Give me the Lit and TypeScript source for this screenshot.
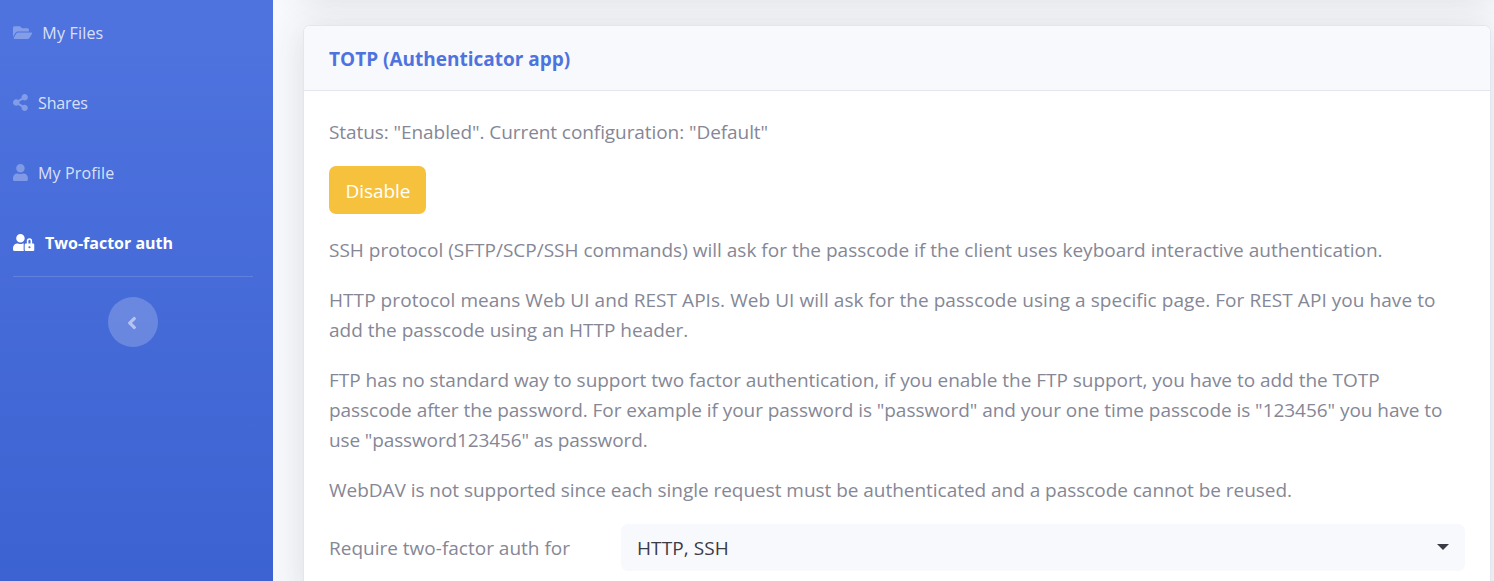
import { LitElement, html, css, svg } from "lit";
import { customElement, property } from "lit/decorators.js";
import { classMap } from "lit/directives/class-map.js";

interface NavEntry {
  label: string;
  cls: string;
  width: number;
  path: string;
  active?: boolean;
}

const NAV: NavEntry[] = [
  {
    label: "My Files",
    cls: "files",
    width: 576,
    path: "M572.694 292.093L500.27 416.248A63.997 63.997 0 0 1 444.989 448H45.025c-18.523 0-30.064-20.093-20.731-36.093l72.424-124.155A64 64 0 0 1 152 256h399.964c18.523 0 30.064 20.093 20.73 36.093zM152 224h328v-48c0-26.51-21.49-48-48-48H272l-64-64H48C21.49 64 0 85.49 0 112v278.046l69.077-118.418C86.214 242.25 117.989 224 152 224z",
  },
  {
    label: "Shares",
    cls: "shares",
    width: 448,
    path: "M352 320c-22.608 0-43.387 7.819-59.79 20.895l-102.486-64.054a96.551 96.551 0 0 0 0-41.683l102.486-64.054C308.613 184.181 329.392 192 352 192c53.019 0 96-42.981 96-96S405.019 0 352 0s-96 42.981-96 96c0 7.158.79 14.13 2.276 20.841L155.79 180.895C139.387 167.819 118.608 160 96 160c-53.019 0-96 42.981-96 96s42.981 96 96 96c22.608 0 43.387-7.819 59.79-20.895l102.486 64.054A96.301 96.301 0 0 0 256 416c0 53.019 42.981 96 96 96s96-42.981 96-96-42.981-96-96-96z",
  },
  {
    label: "My Profile",
    cls: "profile",
    width: 448,
    path: "M224 256c70.7 0 128-57.3 128-128S294.7 0 224 0 96 57.3 96 128s57.3 128 128 128zm89.6 32h-16.7c-22.2 10.2-46.9 16-72.9 16s-50.6-5.8-72.9-16h-16.7C60.2 288 0 348.2 0 422.4V464c0 26.5 21.5 48 48 48h352c26.5 0 48-21.5 48-48v-41.6c0-74.2-60.2-134.4-134.4-134.4z",
  },
  {
    label: "Two-factor auth",
    cls: "mfa",
    width: 640,
    active: true,
    path: "M224 256A128 128 0 1 0 96 128a128 128 0 0 0 128 128zm96 64a63.08 63.08 0 0 1 8.1-30.5c-4.8-.5-9.5-1.5-14.5-1.5h-16.7a174.08 174.08 0 0 1-145.8 0h-16.7A134.43 134.43 0 0 0 0 422.4V464a48 48 0 0 0 48 48h280.9a63.54 63.54 0 0 1-8.9-32zm288-32h-32v-80a80 80 0 0 0-160 0v80h-32a32 32 0 0 0-32 32v160a32 32 0 0 0 32 32h224a32 32 0 0 0 32-32V320a32 32 0 0 0-32-32zM496 432a32 32 0 1 1 32-32 32 32 0 0 1-32 32zm32-144h-64v-80a32 32 0 0 1 64 0z",
  },
];

const CHEVRON =
  "M31.7 239l136-136c9.4-9.4 24.6-9.4 33.9 0l22.6 22.6c9.4 9.4 9.4 24.6 0 33.9L127.9 256l96.4 96.4c9.4 9.4 9.4 24.6 0 33.9L201.7 409c-9.4 9.4-24.6 9.4-33.9 0l-136-136c-9.5-9.4-9.5-24.6-.1-34z";

@customElement("fa-icon")
export class FaIcon extends LitElement {
  static styles = css`
    :host {
      display: block;
      flex: none;
    }
    .glyph {
      display: block;
      fill: currentColor;
      overflow: visible;
    }
  `;
  @property({ type: Number }) size = 17;
  @property({ type: Number }) box = 512;
  @property() path = "";

  render() {
    return html`<svg
      class="glyph"
      viewBox="0 0 ${this.box} 512"
      width=${(this.size * this.box) / 512}
      height=${this.size}
      aria-hidden="true"
    >
      ${svg`<path d=${this.path}></path>`}
    </svg>`;
  }
}

@customElement("side-nav")
export class SideNav extends LitElement {
  static styles = css`
    :host {
      display: flex;
      flex-direction: column;
      box-sizing: border-box;
      width: 273px;
      flex: none;
      padding: 0 20px 0 13px;
      background: linear-gradient(180deg, #4e73df 40px, #224abe 1380px);
    }
    .list {
      display: flex;
      flex-direction: column;
      gap: 4px;
    }
    .item {
      display: flex;
      align-items: center;
      gap: 10.2px;
      height: 66px;
      font-size: 16px;
      line-height: 24px;
      color: rgba(255, 255, 255, 0.8);
      text-decoration: none;
      white-space: nowrap;
    }
    .icon {
      color: rgba(255, 255, 255, 0.3);
      margin-top: -1px;
    }
    .item.active {
      color: #fff;
      font-weight: 700;
    }
    .active .icon {
      color: #fff;
    }
    .files {
      letter-spacing: 0.2px;
    }
    .shares {
      letter-spacing: -0.15px;
    }
    .profile {
      letter-spacing: 0.15px;
    }
    .mfa {
      gap: 10.8px;
    }
    .divider {
      height: 1px;
      background: rgba(255, 255, 255, 0.15);
      margin-bottom: 20px;
    }
    .toggle {
      align-self: center;
      display: flex;
      align-items: center;
      justify-content: center;
      width: 50px;
      height: 50px;
      box-sizing: border-box;
      padding: 1px 2px 0 0;
      border: 0;
      border-radius: 50%;
      background: rgba(255, 255, 255, 0.2);
      color: rgba(255, 255, 255, 0.5);
    }
  `;

  render() {
    return html`
      <nav class="list">
        ${NAV.map(
          (n) => html`<a class=${classMap({ item: true, [n.cls]: true, active: !!n.active })}>
            <fa-icon class="icon" .box=${n.width} .path=${n.path}></fa-icon>
            <span>${n.label}</span>
          </a>`
        )}
      </nav>
      <div class="divider"></div>
      <button class="toggle" aria-label="Toggle sidebar">
        <fa-icon .size=${20} .box=${256} .path=${CHEVRON}></fa-icon>
      </button>
    `;
  }
}

@customElement("app-root")
export class AppRoot extends LitElement {
  static styles = css`
    :host {
      display: flex;
      width: 100%;
      height: 581px;
      overflow: hidden;
      background: #f8f9fc;
      color: #858796;
      font-family: "Open Sans", "Noto Sans", sans-serif;
      font-size: 19px;
      line-height: 30px;
    }
    .content {
      flex: 1;
      min-width: 0;
      display: flex;
      flex-direction: column;
      gap: 30px;
      padding: 0 3px 0 30px;
      margin-top: -205px;
      overflow: hidden;
    }
    .card {
      flex: none;
      border: 1px solid #e3e6f0;
      border-radius: 7px;
      background: #fff;
      box-shadow: 0 3px 35px 0 rgba(58, 59, 69, 0.15);
    }
    .previous {
      height: 198px;
    }
    .header {
      display: flex;
      align-items: center;
      height: 62px;
      padding: 2px 25px 0;
      border-bottom: 1px solid #e3e6f0;
      border-radius: 6px 6px 0 0;
      background: #f8f9fc;
    }
    .title {
      margin: 0;
      font-size: 19px;
      font-weight: 700;
      color: #4e73df;
    }
    .body {
      display: flex;
      flex-direction: column;
      align-items: stretch;
      padding: 26px 25px 25px;
    }
    .text {
      margin: 0 0 20px;
    }
    .text.first {
      margin-bottom: 19px;
    }
    .line {
      display: block;
      white-space: nowrap;
    }
    .status { letter-spacing: -0.075px; }
    .ssh { letter-spacing: 0.007px; }
    .http-a { letter-spacing: 0.063px; }
    .http-b { letter-spacing: -0.01px; }
    .ftp-a { letter-spacing: -0.025px; }
    .ftp-b { letter-spacing: -0.047px; }
    .ftp-c { letter-spacing: -0.13px; }
    .dav { letter-spacing: -0.035px; }
    .warn {
      align-self: flex-start;
      width: 97px;
      height: 48px;
      margin: 0 0 21px;
      padding: 2px 0 0 1px;
      border: 0;
      border-radius: 7px;
      background: #f6c23e;
      color: #fff;
      font: inherit;
      letter-spacing: -0.05px;
    }
    .row {
      display: flex;
      align-items: center;
      margin-top: -1px;
    }
    .label {
      width: 292px;
      flex: none;
    }
    .select {
      flex: 1;
      box-sizing: border-box;
      display: flex;
      align-items: center;
      justify-content: space-between;
      height: 47px;
      padding: 0 16px;
      border-radius: 7px;
      background: #f8f9fc;
      color: #3a3b45;
      letter-spacing: 0.1px;
    }
    .caret {
      border-top: 6px solid currentColor;
      border-left: 6px solid transparent;
      border-right: 6px solid transparent;
      margin-top: -1px;
    }
  `;

  render() {
    return html`
      <side-nav></side-nav>
      <main class="content">
        <section class="card previous"></section>
        <section class="card">
          <header class="header"><h6 class="title">TOTP (Authenticator app)</h6></header>
          <div class="body">
            <p class="text first"><span class="line status">Status: "Enabled". Current configuration: "Default"</span></p>
            <button class="warn">Disable</button>
            <p class="text">
              <span class="line ssh">SSH protocol (SFTP/SCP/SSH commands) will ask for the passcode if the client uses keyboard interactive authentication.</span>
            </p>
            <p class="text">
              <span class="line http-a">HTTP protocol means Web UI and REST APIs. Web UI will ask for the passcode using a specific page. For REST API you have to</span>
              <span class="line http-b">add the passcode using an HTTP header.</span>
            </p>
            <p class="text">
              <span class="line ftp-a">FTP has no standard way to support two factor authentication, if you enable the FTP support, you have to add the TOTP</span>
              <span class="line ftp-b">passcode after the password. For example if your password is "password" and your one time passcode is "123456" you have to</span>
              <span class="line ftp-c">use "password123456" as password.</span>
            </p>
            <p class="text">
              <span class="line dav">WebDAV is not supported since each single request must be authenticated and a passcode cannot be reused.</span>
            </p>
            <div class="row">
              <span class="label">Require two-factor auth for</span>
              <div class="select"><span>HTTP, SSH</span><i class="caret"></i></div>
            </div>
          </div>
        </section>
      </main>
    `;
  }
}
